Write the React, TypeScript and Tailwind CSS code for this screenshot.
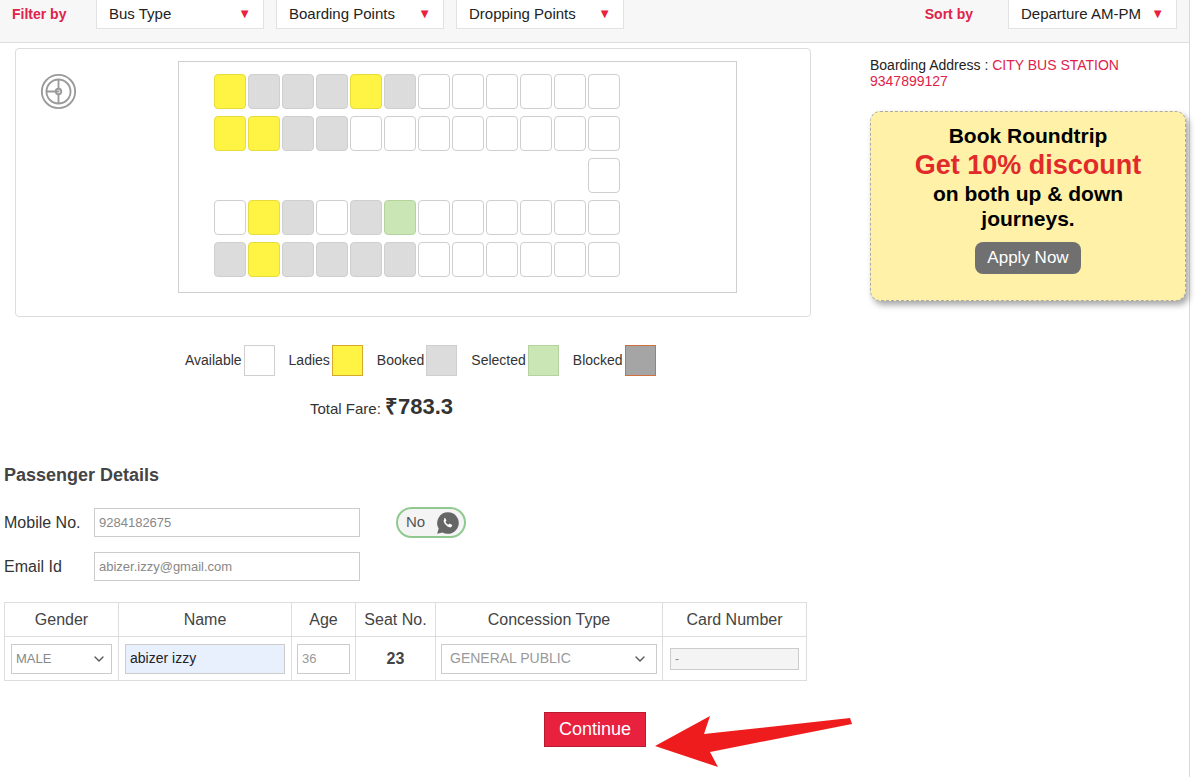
import { ChevronDown } from 'lucide-react';

type S = 'Y' | 'G' | 'W' | 'S' | '-';
const ROWS: S[][] = [
  ['Y', 'G', 'G', 'G', 'Y', 'G', 'W', 'W', 'W', 'W', 'W', 'W'],
  ['Y', 'Y', 'G', 'G', 'W', 'W', 'W', 'W', 'W', 'W', 'W', 'W'],
  ['-', '-', '-', '-', '-', '-', '-', '-', '-', '-', '-', 'W'],
  ['W', 'Y', 'G', 'W', 'G', 'S', 'W', 'W', 'W', 'W', 'W', 'W'],
  ['G', 'Y', 'G', 'G', 'G', 'G', 'W', 'W', 'W', 'W', 'W', 'W'],
];

const seatCls: Record<S, string> = {
  Y: 'bg-[#fff344] border-[#e6dc3c]',
  G: 'bg-[#dcdcdc] border-[#cfcfcf]',
  W: 'bg-white border-[#cfcfcf]',
  S: 'bg-[#c9e6b4] border-[#b5d39f]',
  '-': 'border-transparent',
};

function Drop({ label, w }: { label: string; w: string }) {
  return (
    <div className={`${w} h-[29px] bg-white border border-[#e2e2e2] border-t-0 flex items-center justify-between px-3 text-[15px] text-[#222]`}>
      <span>{label}</span>
      <span className="text-[#e8213f] text-[13px]">▼</span>
    </div>
  );
}

function Legend({ label, cls }: { label: string; cls: string }) {
  return (
    <div className="flex items-center gap-[2px]">
      <span>{label}</span>
      <span className={`w-[31px] h-[31px] border ${cls}`} />
    </div>
  );
}

export default function App() {
  return (
    <div className="w-[1200px] h-[777px] bg-white overflow-hidden text-[#333]" style={{ fontFamily: '"Liberation Sans", Arial, sans-serif' }}>
      <div className="w-[1190px] h-[777px] border-r border-[#d9d9d9] relative">
        {/* filter bar */}
        <div className="h-[43px] bg-[#f7f7f7] border-b border-[#dedede] flex items-start px-3">
          <span className="text-[#e0224a] font-bold text-[14px] mt-[4px] w-[84px]">Filter by</span>
          <div className="flex gap-[12px]">
            <Drop label="Bus Type" w="w-[168px]" />
            <Drop label="Boarding Points" w="w-[168px]" />
            <Drop label="Dropping Points" w="w-[168px]" />
          </div>
          <span className="ml-auto text-[#e0224a] font-bold text-[14px] mt-[4px] mr-[35px]">Sort by</span>
          <Drop label="Departure AM-PM" w="w-[169px]" />
        </div>

        <div className="flex">
          <div className="w-[830px]">
            <div className="ml-[15px] mt-[5px] w-[796px] h-[269px] border border-[#dcdcdc] rounded flex pt-[12px]">
              <div className="w-[162px] pl-[24px] pt-[12px]">
                <svg width="37" height="37" viewBox="0 0 40 40" fill="none" stroke="#9a9a9a" strokeWidth="2">
                  <circle cx="20" cy="20" r="18" />
                  <circle cx="20" cy="20" r="13" />
                  <circle cx="20" cy="20" r="3" />
                  <path d="M7 20h14M20 7v10M20 23v10" />
                </svg>
              </div>
              <div className="w-[559px] h-[232px] border border-[#cfcfcf] pl-[35px] pt-[12px] flex flex-col gap-[7px]">
                {ROWS.map((r, i) => (
                  <div key={i} className="flex gap-[2px]">
                    {r.map((s, j) => (
                      <div key={j} className={`w-[32px] h-[35px] rounded-[4px] border ${seatCls[s]}`} />
                    ))}
                  </div>
                ))}
              </div>
            </div>

            <div className="flex gap-[14px] mt-[28px] text-[14px] text-[#333] pl-[185px]">
              <Legend label="Available" cls="bg-white border-[#cfcfcf]" />
              <Legend label="Ladies" cls="bg-[#fff344] border-[#d7a82a]" />
              <Legend label="Booked" cls="bg-[#dcdcdc] border-[#cfcfcf]" />
              <Legend label="Selected" cls="bg-[#c9e6b4] border-[#b5d39f]" />
              <Legend label="Blocked" cls="bg-[#a5a5a5] border-[#d0703a]" />
            </div>
            <div className="mt-[14px] pl-[310px] text-[15px]">
              Total Fare: <span className="text-[22px] font-bold text-[#333]">₹783.3</span>
            </div>
          </div>

          <div className="flex-1 pt-[14px] pl-[40px]">
            <div className="text-[14px] leading-[16px] text-[#222]">
              Boarding Address : <span className="text-[#e0224a]">CITY BUS STATION</span>
              <br />
              <span className="text-[#e0224a]">9347899127</span>
            </div>
            <div className="mt-[22px] w-[316px] h-[190px] bg-[#fff2a8] border border-dashed border-[#aaa] rounded-[10px] shadow-[3px_4px_6px_rgba(0,0,0,0.35)] flex flex-col items-center pt-[11px]">
              <div className="text-[21px] font-bold text-black leading-[26px]">Book Roundtrip</div>
              <div className="text-[27px] font-bold text-[#e22a2a] leading-[32px]">Get 10% discount</div>
              <div className="text-[21px] font-bold text-black leading-[25px] text-center">
                on both up &amp; down
                <br />
                journeys.
              </div>
              <div className="mt-[11px] bg-[#707070] text-white rounded-[8px] px-3 h-[32px] flex items-center text-[17px]">Apply Now</div>
            </div>
          </div>
        </div>

        <div className="px-[4px] mt-[39px]">
          <div className="text-[18px] font-bold text-[#444]">Passenger Details</div>
          <div className="flex items-center mt-[18px] h-[31px]">
            <span className="w-[90px] text-[16px]">Mobile No.</span>
            <div className="w-[266px] h-[29px] border border-[#ccc] text-[13px] text-[#888] px-1 flex items-center">9284182675</div>
            <div className="ml-[36px] w-[70px] h-[31px] rounded-full border-2 border-[#8fc98f] bg-[#f4f4f4] flex items-center justify-between pl-[8px] pr-[3px] text-[15px] text-[#555]">
              <span>No</span>
              <svg width="26" height="26" viewBox="0 0 24 24" fill="#666">
                <path d="M12 2a10 10 0 0 0-8.6 15.1L2 22l5-1.3A10 10 0 1 0 12 2z" />
                <path fill="#fff" d="M8.5 7.5c.3-.3.8-.3 1 .1l.9 1.7c.2.3.1.7-.2 1l-.6.5c.5 1.2 1.5 2.2 2.7 2.8l.5-.6c.3-.3.7-.4 1-.2l1.7.9c.4.2.5.7.2 1l-.6.8c-.4.5-1.1.7-1.7.5-2.5-.9-4.5-2.9-5.4-5.4-.2-.6 0-1.3.5-1.7z" />
              </svg>
            </div>
          </div>
          <div className="flex items-center mt-[14px] h-[29px]">
            <span className="w-[90px] text-[16px]">Email Id</span>
            <div className="w-[266px] h-[29px] border border-[#ccc] text-[13px] text-[#888] px-1 flex items-center">abizer.izzy@gmail.com</div>
          </div>

          <table className="mt-[21px] border-collapse text-[16px] text-[#444]">
            <thead>
              <tr className="h-[34px]">
                {[
                  ['Gender', 'w-[114px]'],
                  ['Name', 'w-[173px]'],
                  ['Age', 'w-[64px]'],
                  ['Seat No.', 'w-[80px]'],
                  ['Concession Type', 'w-[227px]'],
                  ['Card Number', 'w-[144px]'],
                ].map(([h, w]) => (
                  <th key={h} className={`${w} border border-[#ddd] font-normal`}>{h}</th>
                ))}
              </tr>
            </thead>
            <tbody>
              <tr className="h-[44px]">
                <td className="border border-[#ddd] px-[6px]">
                  <div className="h-[30px] border border-[#ccc] flex items-center justify-between px-1 text-[13px] text-[#888]">MALE<ChevronDown size={16} className="text-[#555]" /></div>
                </td>
                <td className="border border-[#ddd] px-[6px]">
                  <div className="h-[30px] border border-[#ccc] bg-[#e8f0fe] flex items-center px-1 text-[14px] text-[#222]">abizer izzy</div>
                </td>
                <td className="border border-[#ddd] px-[5px]">
                  <div className="h-[30px] border border-[#ccc] flex items-center px-1 text-[13px] text-[#999]">36</div>
                </td>
                <td className="border border-[#ddd] text-center font-bold">23</td>
                <td className="border border-[#ddd] px-[5px]">
                  <div className="h-[30px] border border-[#ccc] flex items-center justify-between px-2 text-[14px] text-[#999]">GENERAL PUBLIC<ChevronDown size={16} className="text-[#555]" /></div>
                </td>
                <td className="border border-[#ddd] px-[7px]">
                  <div className="h-[22px] border border-[#ccc] bg-[#f4f4f4] flex items-center px-1 text-[12px] text-[#888]">-</div>
                </td>
              </tr>
            </tbody>
          </table>

          <div className="flex mt-[31px] pl-[540px]">
            <div className="w-[102px] h-[35px] bg-[#e8213f] border border-[#b81a30] text-white text-[18px] flex items-center justify-center">Continue</div>
          </div>
        </div>

        <svg className="absolute left-[652px] top-[712px]" width="205" height="56" viewBox="0 0 205 56">
          <path d="M3 34 L58 4 L52 22 L198 6 L200 12 L58 40 L66 55 Z" fill="#ee1c1c" />
        </svg>
      </div>
    </div>
  );
}
